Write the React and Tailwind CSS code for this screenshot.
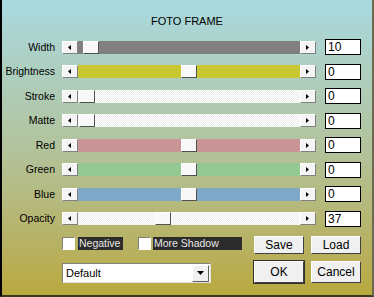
import React from "react";

const rows = [
  { label: "Width", value: "10", track: "bg-[#808080]", thumb: 5, h: "h-[24px]" },
  { label: "Brightness", value: "0", track: "bg-[#c9c832]", thumb: 103, h: "h-[25px]" },
  { label: "Stroke", value: "0", track: "bg-[repeating-conic-gradient(#ececec_0_25%,#ffffff_0_50%)] bg-[length:2px_2px]", thumb: 1, h: "h-[24px]" },
  { label: "Matte", value: "0", track: "bg-[repeating-conic-gradient(#ececec_0_25%,#ffffff_0_50%)] bg-[length:2px_2px]", thumb: 1, h: "h-[25px]" },
  { label: "Red", value: "0", track: "bg-[#c99496]", thumb: 103, h: "h-[24px]" },
  { label: "Green", value: "0", track: "bg-[#93c893]", thumb: 103, h: "h-[25px]" },
  { label: "Blue", value: "0", track: "bg-[#7fa8c9]", thumb: 103, h: "h-[24px]" },
  { label: "Opacity", value: "37", track: "bg-[repeating-conic-gradient(#ececec_0_25%,#ffffff_0_50%)] bg-[length:2px_2px]", thumb: 77, h: "h-[25px]" },
];

function ArrowBtn({ dir }) {
  return (
    <div className="w-[16px] h-full bg-[#f4f4f4] border-t border-l border-white border-r border-b border-r-[#808080] border-b-[#808080] flex items-center justify-center shrink-0">
      <svg width="4" height="5" viewBox="0 0 4 5">
        {dir === "left" ? (
          <polygon points="3,0 3,5 0,2.5" fill="#000" />
        ) : (
          <polygon points="0,0 0,5 3,2.5" fill="#000" />
        )}
      </svg>
    </div>
  );
}

function Slider({ track, thumb }) {
  return (
    <div className="flex w-[254px] h-[13px]">
      <ArrowBtn dir="left" />
      <div className={"relative flex-1 h-full " + track}>
        <div
          className="absolute top-0 h-full w-[16px] bg-[#f8f8f8] border-t border-l border-white border-r border-b border-r-[#505050] border-b-[#505050]"
          style={{ left: thumb }}
        />
      </div>
      <ArrowBtn dir="right" />
    </div>
  );
}

function Btn({ children, tall, def }) {
  return (
    <div
      className={
        "flex items-center justify-center bg-[#f0f0f0] text-black border-t border-l border-white border-r border-b border-r-[#404040] border-b-[#404040] " +
        (tall ? "h-[22px] " : "h-[18px] ") +
        (def ? "outline outline-1 outline-[#303030]" : "")
      }
    >
      <span className="text-[12px] leading-none">{children}</span>
    </div>
  );
}

export default function App() {
  return (
    <div
      className="w-[374px] h-[297px] bg-gradient-to-b from-[#a9d9e0] via-[#b2c39c] to-[#b9a83c] border-l-2 border-l-black border-b-2 border-b-[#3a3a20] border-r-2 border-r-[#6a6a50] text-black overflow-hidden"
      style={{ fontFamily: '"Liberation Sans", Arial, sans-serif' }}
    >
      <div className="pt-[15px] h-[27px] text-center text-[11px] leading-[12px]">FOTO FRAME</div>
      <div className="mt-[8px] flex flex-col">
        {rows.map((r) => (
          <div key={r.label} className={"flex items-center " + r.h}>
            <div className="w-[53px] text-right text-[10.5px] leading-none">{r.label}</div>
            <div className="ml-[7px]">
              <Slider track={r.track} thumb={r.thumb} />
            </div>
            <div className="ml-[9px] w-[36px] h-[16px] bg-white border border-black flex items-center pl-[2px] text-[12px] leading-none">
              {r.value}
            </div>
          </div>
        ))}
      </div>
      <div className="flex pl-[60px]">
        <div className="w-[180px] flex flex-col pt-[6px]">
          <div className="flex items-center h-[13px] text-[10.5px]">
            <div className="w-[13px] h-[13px] bg-white border-t border-l border-[#808080] border-r border-b border-r-white border-b-white" />
            <div className="ml-[3px] h-[13px] w-[45px] bg-[#2c2c2c] text-[#e8e8e8] flex items-center pl-[1px] leading-none whitespace-nowrap">Negative</div>
            <div className="ml-[15px] w-[13px] h-[13px] bg-white border-t border-l border-[#808080] border-r border-b border-r-white border-b-white" />
            <div className="ml-[2px] h-[13px] w-[89px] bg-[#2c2c2c] text-[#e8e8e8] flex items-center pl-[1px] leading-none whitespace-nowrap">More Shadow</div>
          </div>
          <div className="mt-[13px] w-[149px] h-[20px] bg-white border-t border-l border-[#808080] border-r border-b border-r-[#e0e0e0] border-b-[#e0e0e0] flex items-center">
            <span className="flex-1 pl-[3px] text-[11px] leading-none">Default</span>
            <div className="w-[17px] h-[17px] mr-[1px] bg-[#f0f0f0] border-t border-l border-white border-r border-b border-r-[#606060] border-b-[#606060] flex items-center justify-center">
              <svg width="7" height="4" viewBox="0 0 7 4">
                <polygon points="0,0 7,0 3.5,4" fill="#000" />
              </svg>
            </div>
          </div>
        </div>
        <div className="ml-[12px] pt-[5px] grid grid-cols-[50px_50px] gap-x-[7px] gap-y-[6px] items-start">
          <Btn>Save</Btn>
          <Btn>Load</Btn>
          <Btn tall def>OK</Btn>
          <Btn tall>Cancel</Btn>
        </div>
      </div>
    </div>
  );
}
